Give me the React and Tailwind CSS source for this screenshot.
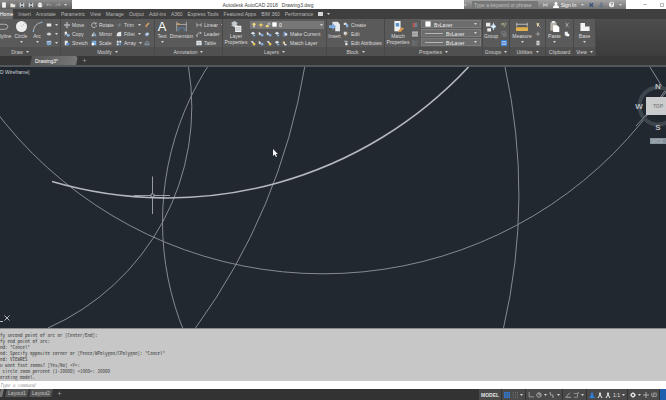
import { Plus } from "lucide-react";

const ribbonTabs = [
  "Home", "Insert", "Annotate", "Parametric", "View", "Manage", "Output",
  "Add-ins", "A360", "Express Tools", "Featured Apps", "BIM 360", "Performance",
];

const history = [
  "fy second point of arc or [Center/End]:",
  "fy end point of arc:",
  "nd: *Cancel*",
  "nd: Specify opposite corner or [Fence/WPolygon/CPolygon]: *Cancel*",
  "nd: VIEWRES",
  "u want fast zooms? [Yes/No] <Y>:",
  " circle zoom percent (1-20000) <1000>: 20000",
  "erating model.",
];

// All glyphs share an 8x8 grid
const glyphs = {
  rect: <><rect x="1" y="2" width="6" height="4" fill="#e3e6e8" /></>,
  ellipse: <><ellipse cx="4" cy="4" rx="3.2" ry="2" fill="#b9bec2" /><circle cx="4" cy="4" r="1" fill="#fff" /></>,
  hatch: <><rect x="1" y="1" width="6" height="6" fill="#6f93bb" /><path d="M1 5l4-4M3 7l4-4M1 2h6" stroke="#d6e2ee" strokeWidth=".8" /></>,
  move: <path d="M4 .5v7M.5 4h7M3 1.5l1-1 1 1M3 6.5l1 1 1-1M1.5 3l-1 1 1 1M6.5 3l1 1-1 1" stroke="#dfe2e4" fill="none" />,
  copy: <><circle cx="2.5" cy="2.5" r="1.8" fill="#e3e6e8" /><circle cx="5.5" cy="5.5" r="2" fill="#8cb3dd" /><path d="M1 6l2-2" stroke="#fff" /></>,
  stretch: <><rect x="1" y="1" width="4" height="6" fill="#e6e8ea" /><rect x="3" y="4" width="4" height="3" fill="#5a94d0" /></>,
  rotate: <path d="M6.5 2.2A3.2 3.2 0 1 0 7.2 4.5M6.8.6v2h-2" stroke="#dfe2e4" fill="none" strokeWidth=".9" />,
  mirror: <><path d="M3.5 1v6H.5z" fill="#e3e6e8" /><path d="M4.5 1v6h3z" fill="#8cb3dd" /></>,
  scale: <><rect x="1" y="1" width="6" height="6" fill="#7faee0" /><rect x="1" y="4" width="3" height="3" fill="#fff" /></>,
  trim: <path d="M.5 4h2M3.5 4h4M5.5 1l-2 6" stroke="#8b98a5" fill="none" strokeWidth=".8" />,
  fillet: <path d="M1 7V5q0-4 6-4v6z" fill="#e3e6e8" />,
  array: <><path d="M1 1h2.5v2.5H1zM4.5 1H7v2.5H4.5zM1 4.5h2.5V7H1z" fill="#dce8f5" /><path d="M4.5 4.5H7V7H4.5z" fill="#5a94d0" /></>,
  erase: <path d="M1 6.5h4M2 5l4-4 1 1-4 4z" stroke="#c9925a" fill="#e5b87c" strokeWidth=".7" />,
  explode: <><path d="M1 4l2-2h3l1 2-2 3H2z" fill="#8ba4c4" /><path d="M3 3h3v2H3z" fill="#dae3ee" /></>,
  offset: <path d="M1 6.5q0-4 3-5 3 1 3 5zM2.5 6.5q0-2 1.5-2.500 1.500.5 1.500 2.500" stroke="#8f9fb3" fill="none" />,
  linear: <path d="M1 1v6M7 1v6M1 4h6M2.500 3L1.500 4l1 1M5.500 3l1 1-1 1" stroke="#c9cdd0" fill="none" strokeWidth=".7" />,
  leader: <path d="M1 7q0-4 3-4.500h3M1 5v2h1.500M5 1l2 1.500L5 4" stroke="#d4d7d9" fill="none" strokeWidth=".8" />,
  table: <><rect x=".5" y="1" width="7" height="6" fill="#eceff1" /><path d="M.5 3h7M3 3v4M5 3v4" stroke="#77818a" strokeWidth=".5" /></>,
  layerA: <><path d="M1 3l3-2 3 2-3 2z" fill="#dfe6ea" /><path d="M4 5h3v2H4z" fill="#7faee0" /></>,
  layerB: <><path d="M1 2l3 3 2-1-3-3z" fill="#d9dde0" /><circle cx="5.500" cy="5.500" r="1.700" fill="#e3c25a" /></>,
  layerC: <><path d="M1 1l3 2-1 3-2-1z" fill="#d9dde0" /><circle cx="5.500" cy="5.500" r="1.700" fill="#7faee0" /></>,
  current: <><path d="M2 1h3v6H2z" fill="#7d9ccb" /><path d="M4 3h3v3H4z" fill="#dfe6ee" /></>,
  match: <><path d="M1 2h3v3H1z" fill="#e3c28a" /><path d="M3 4l4 3H3z" fill="#fff" /></>,
  create: <><path d="M1 1h4v3H1z" fill="#d7dbde" /><path d="M4 3h3v4H4z" fill="#8cb3dd" /></>,
  edit: <><path d="M1 1h4v4H1z" fill="#d7dbde" /><path d="M3 7l1-2 3-3" stroke="#e5b05a" fill="none" /></>,
  attr: <><path d="M1 1l3 3 3-2-2-1z" fill="#aab1b6" /><path d="M3 4h3v3H3z" fill="#e3e6e8" /></>,
  bulb: <><circle cx="4" cy="3" r="2" fill="#f2dd7c" /><path d="M3 5h2v2H3z" fill="#e8e8e8" /></>,
  sun: <><circle cx="4" cy="4" r="1.800" fill="#f0cf62" /><path d="M4 .5v7M.5 4h7" stroke="#f0cf62" strokeWidth=".7" /></>,
  lock: <><path d="M1 4h4v3H1z" fill="#e9d27a" /><path d="M4 4V2.500a1.300 1.300 0 0 1 2.600 0V4" stroke="#d6e2ee" fill="none" /></>,
  swatch: <rect x=".5" y=".5" width="7" height="7" fill="#fff" />,
  color: <><path d="M1 1h3v6H1z" fill="#b85a52" /><path d="M4 1h3v6H4z" fill="#6d7f96" /></>,
  lines: <path d="M0 1.500h8M0 4h8M0 6.500h8" stroke="#e4e7e9" strokeWidth="1.300" />,
  dots: <path d="M0 1.500h8M0 4h8M0 6.500h8" stroke="#92979a" strokeDasharray="1 .6" />,
  calc: <><rect x="2" y="1" width="4" height="6" fill="#d8dbdd" /><path d="M2.500 3.500h3M2.500 5h3" stroke="#777" strokeWidth=".5" /></>,
  plus: <path d="M4 1v6M1 4h6" stroke="#b9bec2" strokeWidth=".8" />,
  quick: <><path d="M2 1l4 1-3 5z" fill="#e0d3a0" /><path d="M4 4l3 3" stroke="#d7dbde" /></>,
  cut: <path d="M2 1l3 5M6 1L3 6M2 6.500h.8M5.200 6.500H6" stroke="#b5babd" fill="none" />,
  clip: <><path d="M1 1h4v5H1z" fill="#e9ebec" /><path d="M4 3l3 1v3H3V4z" fill="#fff" /></>,
  ungroup: <path d="M1 2h3v2H1zM5 1l2 1-3 5" stroke="#d3c79a" fill="none" strokeWidth=".8" />,
  groupEdit: <path d="M1 1h5v3H1zM3 5h4v2H3z" stroke="#8d9499" fill="none" strokeWidth=".8" />,
  groupSel: <><rect width="8" height="8" fill="#3f7fc9" /><path d="M1.500 2h5v4h-5zM4 3v3" stroke="#dbe9f8" fill="none" strokeWidth=".8" /></>,
  page: <><path d="M1.500.5h5v7h-5z" fill="#f2f2f2" /></>,
  folder: <path d="M.5 2h3l.7 1H7v4H.5z" fill="#e6e3d8" />,
  save: <><path d="M1 1h6v6H1z" fill="#cfd4d8" /><path d="M2.500 1h3v2h-3zM2.500 5h3v2h-3z" fill="#48535e" /></>,
  print: <><path d="M1 3h6v3H1z" fill="#dfe2e4" /><path d="M2 1h4v2H2zM2 5h4v2H2z" fill="#fff" /></>,
  undo: <path d="M1 3.500h4q2 0 2 2M3 1.500l-2 2 2 2" stroke="#a5a9ac" fill="none" />,
  redo: <path d="M7 3.500H3q-2 0-2 2M5 1.500l2 2-2 2" stroke="#a5a9ac" fill="none" />,
  // status bar
  grid: <path d="M1 0v8M4 0v8M7 0v8M0 1h8M0 4h8M0 7h8" stroke="#2f7fe0" strokeWidth="1.200" />,
  snap: <path d="M1 1h1M4 1h1M7 1h1M1 4h1M4 4h1M7 4h1M1 7h1M4 7h1M7 7h1" stroke="#8b9094" strokeWidth="1.200" />,
  ortho: <path d="M1.500 0v6.500H8" stroke="#aeb2b5" fill="none" />,
  polar: <><circle cx="4" cy="4" r="3" stroke="#b9bdc0" fill="none" /><path d="M4 4V1M4 4h3" stroke="#b9bdc0" /></>,
  iso: <path d="M0 1l7 6M2 0v5M5 3v5" stroke="#9fa4a8" fill="none" />,
  track: <path d="M6.500 1L1 7h7" stroke="#b9bdc0" fill="none" />,
  osnap: <path d="M1 2h5v5H1M6 1h2v2" stroke="#9fa4a8" fill="none" />,
  personBlue: <path d="M4 0l2 3-1 1 3 4H0l3-4-1-1z" fill="#2f7fe0" />,
  person: <path d="M4 0l1.500 2L5 4l2.500 4H6L4 5 2 8H.5L3 4l-.5-2z" fill="#dcdfe1" />,
  gear: <><circle cx="4" cy="4" r="2.300" stroke="#e2e4e6" strokeWidth="1.700" fill="none" /><path d="M4 0v1.500M4 6.500V8M0 4h1.500M6.500 4H8" stroke="#e2e4e6" /></>,
  addPlus: <path d="M4 0v8M0 4h8" stroke="#c4c7c9" />,
  units: <path d="M0 1l2 6M3 1v5h4V1M5 0v4" stroke="#aeb2b5" fill="none" />,
};

function Glyph({ name, className = "size-[6px]" }) {
  return (
    <svg viewBox="0 0 8 8" className={`shrink-0 ${className}`} aria-hidden="true">
      {glyphs[name]}
    </svg>
  );
}

function Caret() {
  return <svg viewBox="0 0 6 4" className="h-[2px] w-[3px] shrink-0" aria-hidden="true"><path d="M0 0h6L3 4z" fill="#d0d2d3" /></svg>;
}

function Tool({ icon, label, caret }) {
  return (
    <button className="flex h-[9px] items-center gap-[2px] whitespace-nowrap" aria-label={label ?? icon}>
      <Glyph name={icon} />
      {label && <span>{label}</span>}
      {caret && <span className="ml-auto pl-px"><Caret /></span>}
    </button>
  );
}

function BigTool({ label, caret, className = "", children }) {
  return (
    <button className={`flex shrink-0 flex-col items-center leading-[6px] ${className}`}>
      <span className="flex h-[13px] items-center">{children}</span>
      <span className="whitespace-pre">{label}</span>
      {caret && <span className="flex h-[5px] items-center"><Caret /></span>}
    </button>
  );
}

function Panel({ title, className, caret = true, children }) {
  return (
    <section className={`flex shrink-0 flex-col overflow-hidden border-r border-[#484848] bg-[#5a5a5a] ${className}`}>
      <div className="flex flex-1 gap-[3px] pt-px">{children}</div>
      <h2 className="flex h-[9px] items-center justify-center gap-[3px] bg-[#505050] text-[#cfcfcf]">
        {title}
        {caret && <Caret />}
      </h2>
    </section>
  );
}

function Column({ className = "", children }) {
  return <div className={`flex flex-col ${className}`}>{children}</div>;
}

function TitleBar() {
  return (
    <header className="flex h-[9px] bg-white">
      <div className="flex w-[72px] items-center gap-[3px] bg-linear-to-b from-[#8a8a8a] to-[#5e5e5e] pl-px">
        {["page", "folder", "save", "save", "print", "undo", "redo"].map((name, i) => (
          <button key={i} aria-label={name}><Glyph name={name} /></button>
        ))}
        <Caret />
      </div>
      <h1 className="flex flex-1 items-center justify-center gap-[4px] text-[#444]">
        <span>Autodesk AutoCAD 2018</span>
        <span>Drawing3.dwg</span>
      </h1>
      <div className="flex w-[162px] items-center gap-[5px] bg-linear-to-b from-[#a3a3a3] to-[#747474] text-white">
        <span className="-rotate-90"><Caret /></span>
        <input
          aria-label="Search"
          placeholder="Type a keyword or phrase"
          className="h-[7px] w-[66px] bg-[#777] px-[2px] placeholder:text-[#bdbdbd]"
        />
        <svg viewBox="0 0 8 8" className="size-[6px]"><path d="M1 1v6M7 1v6M1 2l6 4M7 2L1 6" stroke="#ddd" fill="none" /></svg>
        <button className="flex items-center gap-[2px] whitespace-nowrap">
          <svg viewBox="0 0 8 8" className="size-[6px]"><circle cx="4" cy="2" r="2" fill="#fff" /><path d="M0 8q0-4 4-4t4 4z" fill="#fff" /></svg>
          Sign In
        </button>
        <span className="ml-auto"><Caret /></span>
        <svg viewBox="0 0 8 8" className="size-[6px]"><path d="M1 1l6 6M7 1L1 7" stroke="#35507c" strokeWidth="2" /></svg>
        <svg viewBox="0 0 8 8" className="size-[6px]"><path d="M4 0l3 7H1z" stroke="#4f698f" fill="none" strokeWidth="1.200" /></svg>
        <svg viewBox="0 0 8 8" className="size-[7px]"><circle cx="4" cy="4" r="4" fill="#eee" /><path d="M2.800 3q.2-1.200 1.300-1.200T5.200 3q0 .7-1.200 1.500M4 5.500v1" stroke="#444" fill="none" /></svg>
        <span className="pr-[4px]"><Caret /></span>
      </div>
      <div className="flex w-[40px] items-center gap-[13px] pl-[17px]">
        <button aria-label="Minimize" className="h-px w-[4px] bg-[#bbb]" />
        <button aria-label="Maximize" className="size-[4px] border border-[#bbb]" />
      </div>
    </header>
  );
}

function LayerSelect() {
  return (
    <div className="flex h-[8px] items-center gap-px bg-[#777] px-px">
      <Glyph name="bulb" />
      <Glyph name="sun" />
      <Glyph name="lock" />
      <Glyph name="swatch" className="size-[5px]" />
      <select aria-label="Layer" className="h-[8px] flex-1 appearance-none pl-px text-white"><option>0</option></select>
      <Caret />
    </div>
  );
}

function PropertySelect({ label, swatch }) {
  return (
    <div className="flex h-[8px] items-center gap-[3px] border border-[#7c7c7c] bg-[#6d6d6d] px-[3px]">
      {swatch ? <Glyph name="swatch" className="size-[6px]" /> : <span className="h-px w-[18px] bg-[#b5b5b5]" />}
      <select aria-label={label} className="h-[6px] flex-1 appearance-none text-[#efefef]"><option>ByLayer</option></select>
      <Caret />
    </div>
  );
}

function Ribbon() {
  return (
    <div className="flex h-[37px] bg-linear-to-b from-[#4d4d4d] to-[#3d3d3d] text-[#dedede]">
      <Panel title="Draw" className="w-[61px] [&>h2]:pr-[20px]">
        <BigTool label="lyline" className="w-[11px] items-start">
          <svg viewBox="0 0 16 16" className="size-[9px]"><path d="M0 13h8q6 0 6-4.500T8 4H0" stroke="#b9bdc0" fill="none" strokeWidth="1.500" /></svg>
        </BigTool>
        <BigTool label="Circle" caret className="w-[14px]">
          <svg viewBox="0 0 16 16" className="size-[11px]"><circle cx="8" cy="8" r="8" fill="#ececec" /><path d="M8 8l5-5" stroke="#9cb5d0" /></svg>
        </BigTool>
        <BigTool label="Arc" caret className="w-[12px]">
          <svg viewBox="0 0 16 16" className="size-[11px]"><path d="M2 15Q3 4 14 2" stroke="#b9bdc0" fill="none" strokeWidth="1.300" /><path d="M1 14h2v2H1zM13 1h2v2h-2z" fill="#7faee0" /></svg>
        </BigTool>
        <Column>
          <Tool icon="rect" caret />
          <Tool icon="ellipse" caret />
          <Tool icon="hatch" caret />
        </Column>
      </Panel>

      <Panel title="Modify" className="w-[94px] pl-[3px] [&>h2]:-ml-[3px]">
        <Column className="w-[24px]">
          <Tool icon="move" label="Move" />
          <Tool icon="copy" label="Copy" />
          <Tool icon="stretch" label="Stretch" />
        </Column>
        <Column className="w-[22px]">
          <Tool icon="rotate" label="Rotate" />
          <Tool icon="mirror" label="Mirror" />
          <Tool icon="scale" label="Scale" />
        </Column>
        <Column className="w-[25px]">
          <Tool icon="trim" label="Trim" caret />
          <Tool icon="fillet" label="Fillet" caret />
          <Tool icon="array" label="Array" caret />
        </Column>
        <Column>
          <Tool icon="erase" />
          <Tool icon="explode" />
          <Tool icon="offset" />
        </Column>
      </Panel>

      <Panel title="Annotation" className="w-[68px] pl-[2px] [&>h2]:-ml-[2px]">
        <BigTool label="Text" caret className="w-[10px]">
          <span className="text-[13px] leading-[13px] text-white">A</span>
        </BigTool>
        <BigTool label="Dimension" className="w-[23px]">
          <svg viewBox="0 0 16 16" className="size-[11px]"><path d="M1 1v14M15 1v14M1 5h14" stroke="#c4c8cb" fill="none" /><path d="M4 15v-5h8v5" stroke="#5a94d0" fill="none" /><path d="M2 3h3v3H2z" fill="#d99b4a" /></svg>
        </BigTool>
        <Column className="w-[26px]">
          <Tool icon="linear" label="Linear" caret />
          <Tool icon="leader" label="Leader" caret />
          <Tool icon="table" label="Table" />
        </Column>
      </Panel>

      <Panel title="Layers" className="w-[104px] pl-[2px] [&>h2]:-ml-[2px]">
        <BigTool label={"Layer\nProperties"} className="w-[22px]">
          <svg viewBox="0 0 16 16" className="size-[11px]"><path d="M0 3l5-3 5 3-5 3zM0 6l5-3 5 3-5 3z" fill="#c5ccd1" /><path d="M6 7h9v9H6z" fill="#f1f2f3" /><path d="M7 10h7M7 13h7" stroke="#88929a" /></svg>
        </BigTool>
        <Column className="flex-1 pr-[2px]">
          <div className="flex h-[9px] flex-col justify-center"><LayerSelect /></div>
          <div className="flex gap-[2px]">
            {["layerA", "layerC", "layerC", "layerA"].map((n, i) => <Tool key={i} icon={n} />)}
            <Tool icon="current" label="Make Current" />
          </div>
          <div className="flex gap-[2px]">
            {["layerB", "layerC", "layerB", "layerA"].map((n, i) => <Tool key={i} icon={n} />)}
            <Tool icon="match" label="Match Layer" />
          </div>
        </Column>
      </Panel>

      <Panel title="Block" className="w-[58px] pl-[2px] [&>h2]:-ml-[2px]">
        <BigTool label="Insert" className="w-[11px]">
          <svg viewBox="0 0 16 16" className="size-[11px]"><path d="M5 1h8l3 4v10H9V9H5z" fill="#e6e9eb" /><path d="M0 6h5V3l5 5-5 5v-3H0z" fill="#7faee0" /></svg>
        </BigTool>
        <Column>
          <Tool icon="create" label="Create" />
          <Tool icon="edit" label="Edit" />
          <div className="flex"><Tool icon="attr" label="Edit Attributes" caret /></div>
        </Column>
      </Panel>

      <Panel title="Properties" className="w-[98px] pl-[2px] [&>h2]:-ml-[2px]">
        <BigTool label={"Match\nProperties"} className="w-[22px]">
          <svg viewBox="0 0 16 16" className="size-[11px]"><path d="M2 0h9v15H2z" fill="#eef0f1" /><path d="M4 3h5v5H4z" fill="#5a94d0" /><path d="M7 15l6-6 3 2-5 5z" fill="#d99b4a" /></svg>
        </BigTool>
        <Column>
          <Tool icon="color" />
          <Tool icon="lines" />
          <Tool icon="dots" />
        </Column>
        <Column className="flex-1 gap-px pr-px">
          <PropertySelect label="Object color" swatch />
          <PropertySelect label="Lineweight" />
          <PropertySelect label="Linetype" />
        </Column>
      </Panel>

      <Panel title="Groups" className="w-[27px] pl-px [&>h2]:-ml-px">
        <BigTool label="Group" className="w-[14px]">
          <svg viewBox="0 0 16 16" className="size-[10px]"><path d="M0 1h7v6H0zM2 10h6v5H2z" fill="#e8eaeb" /><circle cx="12" cy="7" r="3.500" fill="#a9d2ea" /><path d="M12 1v12M7 7h9" stroke="#fff" /></svg>
        </BigTool>
        <Column>
          <Tool icon="ungroup" />
          <Tool icon="groupEdit" />
          <Tool icon="groupSel" />
        </Column>
      </Panel>

      <Panel title="Utilities" className="w-[36px] pl-[2px] [&>h2]:-ml-[2px]">
        <BigTool label="Measure" caret className="w-[20px]">
          <svg viewBox="0 0 16 12" className="h-[9px] w-[12px]"><path d="M1 1v5M15 1v5M1 3h14" stroke="#d7dadc" fill="none" /><path d="M0 7h16v5H0z" fill="#e0b04c" /></svg>
        </BigTool>
        <Column>
          <Tool icon="quick" />
          <Tool icon="plus" />
          <Tool icon="calc" />
        </Column>
      </Panel>

      <Panel title="Clipboard" caret={false} className="w-[28px] pl-[2px] [&>h2]:-ml-[2px]">
        <BigTool label="Paste" caret className="w-[13px]">
          <svg viewBox="0 0 16 16" className="size-[11px]"><path d="M2 2h9v12H2z" fill="#b7b2a6" /><path d="M4 0h5v3H4z" fill="#e5e5e5" /><path d="M6 6h6l3 3v7H6z" fill="#fff" /></svg>
        </BigTool>
        <Column>
          <Tool icon="cut" />
          <Tool icon="clip" />
        </Column>
      </Panel>

      <Panel title="View" className="w-[22px]">
        <BigTool label="Base" caret className="w-full">
          <svg viewBox="0 0 16 14" className="h-[8px] w-[10px]"><path d="M0 0h8v6h8v8H0z" fill="#f2f2f2" /></svg>
        </BigTool>
      </Panel>
    </div>
  );
}

function DrawingArea() {
  return (
    <main className="relative min-h-0 flex-1 overflow-hidden border-t-2 border-[#54585c] bg-[#212830]">
      <svg viewBox="0 67 666 261" preserveAspectRatio="xMidYMid slice" className="absolute inset-0 size-full">
        <g fill="none" stroke="#858b91" strokeWidth="1">
          <circle cx="323" cy="-137" r="410.800" />
          <circle cx="452.500" cy="222" r="290" clipPath="url(#leftHalf)" />
          <path d="M505 67A595 595 0 0 1 503.500 328" />
          <path d="M304.700 67A619 619 0 0 1 195.500 328" />
          <path d="M188.500 67A241.800 241.800 0 0 1 48 328" />
          <path d="M650 67L666 93" />
        </g>
        <clipPath id="leftHalf"><rect x="0" y="67" width="300" height="261" /></clipPath>
        <path d="M52 181.500A412 412 0 0 0 468.500 67" fill="none" stroke="#b4b9bd" strokeWidth="1.600" />
        <path d="M152.500 176.500v17M152.500 197v17M134 195.500h17M154 195.500h16M151 194h3v3h-3z" fill="none" stroke="#b5babf" strokeWidth=".8" />
        <path d="M273 149v7l1.700-1.500 1.300 2.500 1-.6-1.200-2.300h2z" fill="#f5f5f5" />
        <path d="M0 321.500h3M4.500 315.500l5 5M9.500 315.500l-5 5" stroke="#c5c9cc" strokeWidth=".9" />
      </svg>
      <p className="absolute top-[2px] left-0 leading-[6px] text-[#d2d5d8]">D Wireframe]</p>
      {/* View cube */}
      <svg viewBox="0 0 32 70" className="absolute top-[13px] right-0 h-[70px] w-[32px]" fontWeight="bold" fontSize="8" fill="#b7bbbf" textAnchor="middle">
        <circle cx="24" cy="26" r="18.500" fill="none" stroke="#3d454d" strokeWidth="4" />
        <path d="M12 17h20v18H12z" fill="#c9cbcc" />
        <path d="M28 17l4-5M12 35l-10 11" stroke="#858b91" />
        <text x="24" y="28" fontSize="5" fill="#888">TOP</text>
        <text x="24" y="9">N</text>
        <text x="5" y="29">W</text>
        <text x="24" y="50">S</text>
        <path d="M16 58h16v6H16z" fill="#87949d" />
        <text x="23" y="63" fontSize="5" fontWeight="normal" fill="#b3bcc2">WCS</text>
      </svg>
    </main>
  );
}

function StatusBar() {
  const cell = "flex h-full items-center gap-[2px] border-r border-[#333] px-[2px]";
  return (
    <footer className="flex h-[11px] items-center justify-between bg-[#333]">
      <div className="flex h-full items-start text-[#c4c4c4]">
        <button className="h-[8px] w-[3px] -skew-x-12 bg-[#777]" aria-label="Model" />
        <button className="ml-[3px] h-[8px] w-[22px] -skew-x-12 bg-[#555]"><span className="block skew-x-12">Layout1</span></button>
        <button className="ml-[2px] h-[8px] w-[22px] -skew-x-12 bg-[#555]"><span className="block skew-x-12">Layout2</span></button>
        <button className="ml-[3px] grid size-[8px] place-items-center" aria-label="New layout"><Plus size={5} /></button>
      </div>
      <div className="flex h-full items-center bg-[#4a4a4a] text-[#e2e2e2]">
        <button className={`${cell} font-bold`}>MODEL</button>
        <div className={cell}><Glyph name="grid" /><Glyph name="snap" /><Caret /></div>
        <div className={cell}><Glyph name="ortho" /><Glyph name="polar" /><Caret /><Glyph name="iso" /><Caret /></div>
        <div className={cell}><Glyph name="track" /><Glyph name="osnap" /><Caret /></div>
        <div className={cell}><Glyph name="personBlue" /><Glyph name="person" /><Glyph name="person" /><span>1:1</span><Caret /></div>
        <div className={cell}><Glyph name="gear" /><Caret /><Glyph name="addPlus" /><Glyph name="units" /></div>
        <span className="h-full w-[6px] bg-[#1f5fae]" />
      </div>
    </footer>
  );
}

export default function App() {
  return (
    <div className="flex h-screen flex-col overflow-hidden bg-[#333] font-['Liberation_Sans',sans-serif] text-[5px] leading-[8px]">
      <TitleBar />
      <nav className="flex h-[10px] items-center gap-[5px] bg-[#3f3f3f] whitespace-nowrap text-[#b9b9b9]">
        {ribbonTabs.map((tab) => (
          <button key={tab} className={tab === "Home" ? "h-full bg-[#6a6a6a] text-white" : ""}>
            {tab}
          </button>
        ))}
        <button className="flex items-center gap-[4px]" aria-label="Ribbon display">
          <span className="h-[4px] w-[5px] bg-[#d5d5d5]" />
          <Caret />
        </button>
      </nav>
      <Ribbon />
      <div className="flex h-[9px] items-center bg-[#373737]">
        <button className="ml-[31px] flex h-full w-[46px] -skew-x-12 items-center rounded-tr-[3px] bg-linear-to-r from-[#555] to-[#777] px-[4px] text-white">
          <span className="skew-x-12">Drawing3*</span>
        </button>
        <button className="ml-[3px] grid size-[8px] place-items-center text-[#bbb]" aria-label="New drawing"><Plus size={5} /></button>
      </div>
      <DrawingArea />
      <section className="border-t border-[#8b8b8b] bg-[#c7c7c7] pt-[3px] pb-px font-['Noto_Sans_Mono_CJK_SC','Liberation_Mono',monospace] leading-[6px] text-[#444]">
        {history.map((line, i) => <p key={i} className="whitespace-pre">{line}</p>)}
      </section>
      <input
        aria-label="Command"
        placeholder="Type a command"
        className="h-[8px] bg-white font-['Noto_Sans_Mono_CJK_SC','Liberation_Mono',monospace] italic placeholder:text-[#9a9a9a]"
      />
      <StatusBar />
    </div>
  );
}
